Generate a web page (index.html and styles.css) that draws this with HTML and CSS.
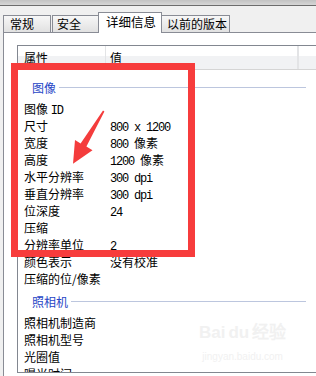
FILE: index.html
```html
<!DOCTYPE html>
<html lang="zh-CN">
<head>
  <meta charset="UTF-8" />
  <title>详细信息</title>
  <link rel="stylesheet" href="styles.css">
</head>
<body>
  <div class="titlebar"></div>

  <div class="tabs">
    <div class="tab tab-general">常规</div>
    <div class="tab tab-security">安全</div>
    <div class="tab tab-details active">详细信息</div>
    <div class="tab tab-previous">以前的版本</div>
  </div>

  <div class="panel">
    <div class="list">
      <div class="head">
        <div class="hc hc-name">属性</div>
        <div class="hc hc-value">值</div>
        <div class="hc"></div>
      </div>

      <div class="rows">
        <div class="group"><span>图像</span><i></i></div>
        <div class="row"><div class="k">图像 <span class="num">ID</span></div><div class="v"></div></div>
        <div class="row"><div class="k">尺寸</div><div class="v"><span class="num">800 x 1200</span></div></div>
        <div class="row"><div class="k">宽度</div><div class="v"><span class="num">800 </span>像素</div></div>
        <div class="row"><div class="k">高度</div><div class="v"><span class="num">1200 </span>像素</div></div>
        <div class="row"><div class="k">水平分辨率</div><div class="v"><span class="num">300 dpi</span></div></div>
        <div class="row"><div class="k">垂直分辨率</div><div class="v"><span class="num">300 dpi</span></div></div>
        <div class="row"><div class="k">位深度</div><div class="v"><span class="num">24</span></div></div>
        <div class="row"><div class="k">压缩</div><div class="v"></div></div>
        <div class="row"><div class="k">分辨率单位</div><div class="v"><span class="num">2</span></div></div>
        <div class="row"><div class="k">颜色表示</div><div class="v">没有校准</div></div>
        <div class="row"><div class="k">压缩的位/像素</div><div class="v"></div></div>

        <div class="group"><span>照相机</span><i></i></div>
        <div class="row"><div class="k">照相机制造商</div><div class="v"></div></div>
        <div class="row"><div class="k">照相机型号</div><div class="v"></div></div>
        <div class="row"><div class="k">光圈值</div><div class="v"></div></div>
        <div class="row row-last"><div class="k">曝光时间</div><div class="v"></div></div>
      </div>
    </div>
  </div>

  <!-- annotation drawn over the screenshot -->
  <div class="highlight"></div>
  <svg class="arrow" width="316" height="376" viewBox="0 0 316 376">
    <polygon points="103,110.6 104.4,111.6 86.4,146.6 92.5,150.2 73,163.8 75,140 80.6,143.4" fill="#f43c3c"/>
  </svg>

  <div class="watermark">
    <div class="wm-logo">Bai<span class="wm-du">du</span>经验</div>
    <div class="wm-url">jingyan.baidu.com</div>
  </div>
</body>
</html>
```

FILE: styles.css
```css
html, body {
  margin: 0;
  padding: 0;
  overflow: hidden;
}

body {
  width: 316px;
  height: 376px;
  position: relative;
  background: #f0f0f0;
  font-family: "Noto Sans CJK SC", sans-serif;
  font-size: 12px;
  color: #000;
}

.titlebar {
  height: 5px;
  background: linear-gradient(#c2c2c2, #d6d6d6);
  border-bottom: 1px solid #6c6c6c;
}

/* tab strip */
.tabs {
  display: flex;
  align-items: flex-end;
  height: 26px;
  padding-left: 3px;
  position: relative;
  z-index: 1;
}

.tab {
  box-sizing: border-box;
  height: 17px;
  line-height: 16px;
  border: 1px solid #898c95;
  border-bottom: none;
  background: linear-gradient(#f7f7f7, #e1e1e1);
  white-space: nowrap;
}

.tab-general {
  width: 48px;
  padding-left: 6px;
}

.tab-security {
  width: 48px;
  margin-left: 1px;
  padding-left: 4px;
}

.tab-details {
  width: 64px;
  margin-left: -2px;
  margin-right: -2px;
  padding-left: 7px;
}

.tab-previous {
  width: 70px;
  padding-left: 6px;
}

.tab.active {
  height: 21px;
  line-height: 18px;
  margin-bottom: -1px;
  background: #fff;
  position: relative;
  z-index: 2;
  font-size: 12.5px;
}

/* tab page */
.panel {
  box-sizing: border-box;
  width: 313px;
  height: 344px;
  margin-left: 3px;
  background: #fff;
  border-top: 1px solid #898c95;
  border-left: 1px solid #898c95;
  padding: 12px 0 0 13px;
  overflow: hidden;
}

.list {
  box-sizing: border-box;
  width: 299px;
  height: 328px;
  overflow: hidden;
  border: 1px solid #828790;
  border-right: none;
  background: #fff;
}

.head {
  display: flex;
  height: 23px;
  line-height: 23px;
  border-bottom: 1px solid #d5d5d5;
  background: linear-gradient(#ffffff 0, #ffffff 45%, #f1f2f4 45%, #f1f2f4 100%);
}

.hc {
  box-sizing: border-box;
}

.hc-name {
  width: 88px;
  padding-left: 6px;
  border-right: 1px solid #e3e4e6;
}

.hc-value {
  width: 193px;
  padding-left: 4px;
  border-right: 2px solid #e3e4e6;
}

.rows {
  padding-top: 3px;
}

.group {
  box-sizing: border-box;
  display: flex;
  align-items: center;
  gap: 3px;
  width: 288px;
  height: 27px;
  padding: 2px 0 0 14px;
  color: #2746c6;
}

.group i {
  flex: 1;
  height: 1px;
  background: #bcc6de;
}

.row {
  display: flex;
  height: 17px;
  line-height: 17px;
  white-space: nowrap;
}

.row-last {
  height: 8px;
  line-height: 17px;
  overflow: hidden;
  align-items: flex-start;
}

.k {
  box-sizing: border-box;
  width: 87px;
  padding-left: 6px;
}

.v {
  padding-left: 5px;
}

.num {
  font-family: "Liberation Mono", monospace;
  font-size: 12px;
  letter-spacing: -1.2px;
  white-space: pre;
}

/* red annotation */
.highlight {
  position: absolute;
  left: 11px;
  top: 63px;
  width: 184px;
  height: 194px;
  box-sizing: border-box;
  border: 7px solid #f73c3c;
  z-index: 5;
}

.arrow {
  position: absolute;
  left: 0;
  top: 0;
  z-index: 5;
}

.watermark {
  position: absolute;
  left: 199px;
  top: 322px;
  color: #f1f1f1;
  font-family: "Liberation Sans", sans-serif;
  text-align: center;
  z-index: 4;
}

.wm-logo {
  font-size: 17px;
  font-weight: bold;
  line-height: 22px;
}

.wm-du {
  margin: 0 3px;
}

.wm-url {
  font-size: 10px;
  line-height: 16px;
  margin-top: 5px;
}
```
